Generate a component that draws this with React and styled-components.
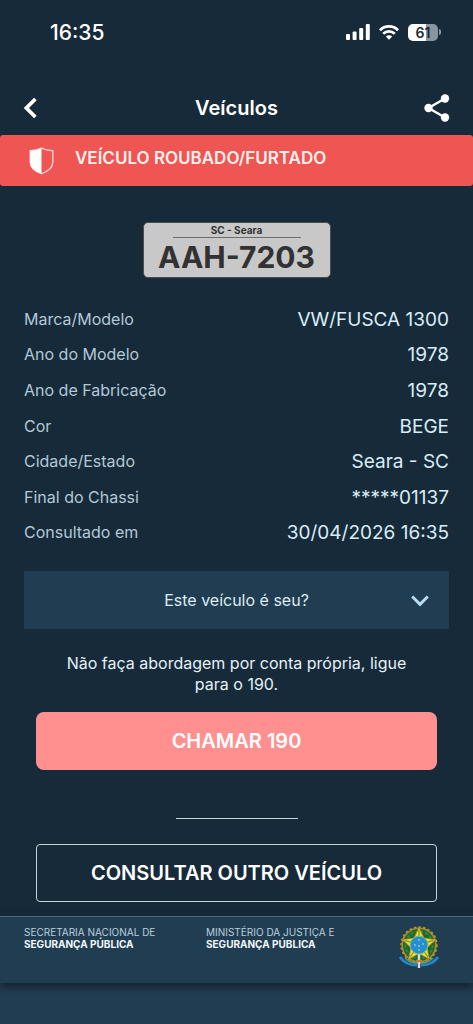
import { useState } from "react"
import styled, { createGlobalStyle } from "styled-components"

const GlobalStyle = createGlobalStyle`
  * {
    box-sizing: border-box;
    margin: 0;
    padding: 0;
  }
  body {
    background-color: #172a3a;
    font-family: Inter, "Liberation Sans", sans-serif;
    color: #e4f1f8;
  }
  button {
    font-family: inherit;
    border: none;
    background: none;
    color: inherit;
    cursor: pointer;
  }
`

const Tela = styled.div`
  min-height: 100vh;
  display: flex;
  flex-direction: column;
`

const BarraStatus = styled.div`
  height: 64px;
  padding: 0 32px 0 50px;
  display: flex;
  align-items: center;
  justify-content: space-between;
  color: white;
  font-size: 21px;
  font-weight: 500;
`

const StatusIcones = styled.div`
  display: flex;
  align-items: center;
  gap: 9px;
`

const Bateria = styled.div`
  width: 30px;
  height: 17px;
  border-radius: 5px;
  background: linear-gradient(to right, #ffffff 61%, #8995a0 61%);
  color: #172a3a;
  font-size: 14px;
  font-weight: 600;
  line-height: 17px;
  text-align: center;
`

const BateriaGrupo = styled.div`
  display: flex;
  align-items: center;
  gap: 1px;

  &::after {
    content: "";
    width: 2px;
    height: 6px;
    border-radius: 0 2px 2px 0;
    background-color: #8995a0;
  }
`

const Cabecalho = styled.header`
  height: 71px;
  padding: 16px 16px 0;
  display: grid;
  grid-template-columns: 40px 1fr 40px;
  align-items: center;

  h1 {
    font-size: 20px;
    font-weight: 600;
    text-align: center;
    color: white;
  }
`

const BotaoIcone = styled.button`
  height: 40px;
  display: flex;
  align-items: center;
  justify-content: ${(props) => props.$lado};
  padding: 0 7px;
  color: white;
`

const Alerta = styled.div`
  height: 51px;
  padding: 0 28px;
  display: flex;
  align-items: center;
  gap: 20px;
  border-radius: 3px;
  background-color: #ef5552;
  color: #fff1ee;

  strong {
    padding-bottom: 6px;
    font-size: 17px;
    font-weight: 600;
  }
`

const Conteudo = styled.main`
  padding: 36px 24px 14px;
`

const Placa = styled.div`
  width: 188px;
  height: 56px;
  margin: 0 auto 24px;
  border: 1px solid #4a4d50;
  border-radius: 5px;
  background-color: #c8c8c8;
  color: #323232;
  display: flex;
  flex-direction: column;
  align-items: center;

  span {
    width: 128px;
    border-bottom: 1px solid #6d6d6d;
    font-size: 10px;
    font-weight: 700;
    line-height: 14px;
    text-align: center;
  }
  strong {
    font-size: 30px;
    font-weight: 700;
    line-height: 38px;
  }
`

const Dados = styled.dl`
  height: 249px;
  margin-bottom: 20px;
  display: flex;
  flex-direction: column;
`

const Linha = styled.div`
  flex: 1;
  display: flex;
  align-items: center;
  justify-content: space-between;

  dt {
    padding-bottom: 2px;
    font-size: 16px;
    line-height: 24px;
    color: #b3c8d6;
  }
  dd {
    font-size: 19px;
    line-height: 24px;
    color: #d9edf8;
  }
`

const Expansivel = styled.button`
  width: 100%;
  height: 58px;
  padding: 0 18px;
  display: grid;
  grid-template-columns: 20px 1fr 20px;
  align-items: center;
  background-color: #213d52;
  font-size: 16px;
  color: #dcebf3;

  span {
    grid-column: 2;
  }
  svg {
    transform: rotate(${(props) => (props.$aberto ? "180deg" : "0deg")});
  }
`

const Aviso = styled.p`
  padding: 0 32px;
  margin: 24px 0 17px;
  font-size: 16px;
  line-height: 21px;
  text-align: center;
`

const Acoes = styled.div`
  padding: 0 12px;
  display: flex;
  flex-direction: column;
`

const BotaoAcao = styled.button`
  height: 58px;
  border-radius: ${(props) => (props.$contorno ? "4px" : "8px")};
  border: ${(props) => (props.$contorno ? "1px solid #c3d4dc" : "none")};
  background-color: ${(props) => (props.$contorno ? "transparent" : "#ff908f")};
  color: white;
  font-size: 20px;
  font-weight: 600;
`

const Divisor = styled.hr`
  width: 122px;
  margin: 48px auto 25px;
  border: none;
  border-top: 1px solid #c3d4dc;
`

const Rodape = styled.footer`
  height: 67px;
  padding: 8px 32px 0 24px;
  display: grid;
  grid-template-columns: 182px 1fr 44px;
  align-items: start;
  border-top: 1px solid #4c6b80;
  background-color: #213d52;
  box-shadow: 0 4px 8px #13212e;
  position: relative;
`

const Orgao = styled.p`
  padding-top: 1px;
  font-size: 10px;
  line-height: 12px;
  color: #b9d0de;

  strong {
    display: block;
    font-weight: 700;
    color: #f0f8fc;
  }
`

const BaseTela = styled.div`
  flex: 1;
  min-height: 41px;
  background-color: #213d52;
`

const veiculo = [
  ["Marca/Modelo", "VW/FUSCA 1300"],
  ["Ano do Modelo", "1978"],
  ["Ano de Fabricação", "1978"],
  ["Cor", "BEGE"],
  ["Cidade/Estado", "Seara - SC"],
  ["Final do Chassi", "*****01137"],
  ["Consultado em", "30/04/2026 16:35"],
]

const Sinal = () => (
  <svg width="24" height="16" viewBox="0 0 24 16" fill="white">
    <rect x="0" y="10" width="4" height="6" rx="1" />
    <rect x="6.6" y="7.5" width="4" height="8.5" rx="1" />
    <rect x="13.2" y="4" width="4" height="12" rx="1" />
    <rect x="19.8" y="0" width="4" height="16" rx="1" />
  </svg>
)

const Wifi = () => (
  <svg width="20" height="15" viewBox="0 0 20 15" fill="none" stroke="white" strokeWidth="2.7">
    <path d="M0.9 5.2C6 0.1 14 0.1 19.1 5.2" />
    <path d="M4.2 8.7C7.5 5.6 12.5 5.6 15.8 8.7" />
    <path d="M6.8 11.4C8.6 9.8 11.4 9.8 13.2 11.4L10 14.8Z" fill="white" stroke="none" />
  </svg>
)

const Voltar = () => (
  <svg width="14" height="22" viewBox="0 0 14 22" fill="none" stroke="white" strokeWidth="3.8">
    <path d="M12.4 2L3.4 11L12.4 20" />
  </svg>
)

const Compartilhar = () => (
  <svg width="26" height="28" viewBox="0 0 26 28" fill="white">
    <path d="M21 4.5L4.5 14L21 23.5" fill="none" stroke="white" strokeWidth="2.4" />
    <circle cx="4.5" cy="14" r="4.2" />
    <circle cx="21" cy="4.5" r="4.2" />
    <circle cx="21" cy="23.5" r="4.2" />
  </svg>
)

const Escudo = () => (
  <svg width="27" height="28" viewBox="0 0 27 28">
    <path
      d="M13.5 1.2C10 3 6 3.6 2.2 3.7V15C2.2 21 7 24.5 13.5 26.7C20 24.5 24.8 21 24.8 15V3.7C21 3.6 17 3 13.5 1.2Z"
      fill="none"
      stroke="#fbd3cf"
      strokeWidth="1.4"
    />
    <path d="M13.5 1.2C10 3 6 3.6 2.2 3.7V15C2.2 21 7 24.5 13.5 26.7Z" fill="white" />
  </svg>
)

const Seta = () => (
  <svg width="18" height="14" viewBox="0 0 18 14" fill="none" stroke="#b9dcf3" strokeWidth="3">
    <path d="M1.2 3.5L9 11.3L16.8 3.5" />
  </svg>
)

// pontas da estrela central do brasão
const estrela = (raio, interno) =>
  Array.from({ length: 10 }, (_, i) => {
    const r = i % 2 ? interno : raio
    const a = (Math.PI / 5) * i - Math.PI / 2
    return `${22 + r * Math.cos(a)},${20 + r * Math.sin(a)}`
  }).join(" ")

const Brasao = () => (
  <svg width="44" height="46" viewBox="0 0 44 46" role="img" aria-label="Brasão da República">
    <circle cx="22" cy="20" r="17" fill="#1d6a30" />
    <circle cx="22" cy="20" r="16.8" fill="none" stroke="#a88a2c" strokeWidth="1.6" />
    <circle cx="22" cy="20" r="17.8" fill="none" stroke="#b8922e" strokeWidth="1.8" strokeDasharray="2.4 2.2" />
    <circle cx="22" cy="20" r="13.6" fill="none" stroke="#3f8232" strokeWidth="2" strokeDasharray="3 2" />
    <path d="M3 32C7 38 13 40 20 40M41 32C37 38 31 40 24 40" fill="none" stroke="#2485c4" strokeWidth="3" />
    <path d="M8 33C12 37 17 38 21 38M36 33C32 37 27 38 23 38" fill="none" stroke="#5f9f77" strokeWidth="1.4" />
    <polygon points={estrela(18, 9)} fill="#d69225" />
    <polygon points={estrela(16, 8)} fill="#e8df38" />
    <path d="M22 20V5M22 20L36 15.4M22 20L31 32M22 20L13 32M22 20L8 15.4" stroke="#6aa336" strokeWidth="1.2" />
    <path d="M22 29V43" stroke="#d9dddc" strokeWidth="2.4" />
    <path d="M19 36H25" stroke="#d7772d" strokeWidth="2.4" />
    <circle cx="22" cy="20" r="8.8" fill="#268fcb" stroke="#66b5a5" strokeWidth="1" />
    <g fill="#c5e8fa">
      <circle cx="22" cy="15" r="0.8" />
      <circle cx="18" cy="20" r="0.8" />
      <circle cx="26" cy="19" r="0.8" />
      <circle cx="22" cy="21" r="0.8" />
      <circle cx="22" cy="25" r="0.8" />
    </g>
  </svg>
)

const App = () => {
  const [aberto, setAberto] = useState(false)

  return (
    <>
      <GlobalStyle />
      <Tela>
        <BarraStatus>
          <span>16:35</span>
          <StatusIcones>
            <Sinal />
            <Wifi />
            <BateriaGrupo>
              <Bateria>61</Bateria>
            </BateriaGrupo>
          </StatusIcones>
        </BarraStatus>

        <Cabecalho>
          <BotaoIcone $lado="flex-start" aria-label="Voltar">
            <Voltar />
          </BotaoIcone>
          <h1>Veículos</h1>
          <BotaoIcone $lado="flex-end" aria-label="Compartilhar">
            <Compartilhar />
          </BotaoIcone>
        </Cabecalho>

        <Alerta>
          <Escudo />
          <strong>VEÍCULO ROUBADO/FURTADO</strong>
        </Alerta>

        <Conteudo>
          <Placa>
            <span>SC - Seara</span>
            <strong>AAH-7203</strong>
          </Placa>

          <Dados>
            {veiculo.map(([rotulo, valor]) => (
              <Linha key={rotulo}>
                <dt>{rotulo}</dt>
                <dd>{valor}</dd>
              </Linha>
            ))}
          </Dados>

          <Expansivel $aberto={aberto} aria-expanded={aberto} onClick={() => setAberto(!aberto)}>
            <span>Este veículo é seu?</span>
            <Seta />
          </Expansivel>

          <Aviso>Não faça abordagem por conta própria, ligue para o 190.</Aviso>

          <Acoes>
            <BotaoAcao>CHAMAR 190</BotaoAcao>
            <Divisor />
            <BotaoAcao $contorno>CONSULTAR OUTRO VEÍCULO</BotaoAcao>
          </Acoes>
        </Conteudo>

        <Rodape>
          <Orgao>
            SECRETARIA NACIONAL DE
            <strong>SEGURANÇA PÚBLICA</strong>
          </Orgao>
          <Orgao>
            MINISTÉRIO DA JUSTIÇA E
            <strong>SEGURANÇA PÚBLICA</strong>
          </Orgao>
          <Brasao />
        </Rodape>
        <BaseTela />
      </Tela>
    </>
  )
}

export default App
